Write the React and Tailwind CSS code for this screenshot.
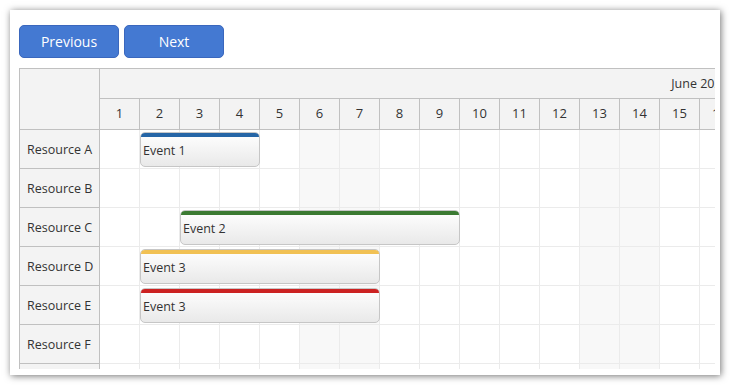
import React from "react";

const days = Array.from({ length: 30 }, (_, i) => i + 1);
const weekend = new Set([6, 7, 13, 14, 20, 21, 27, 28]);
const resources = ["Resource A", "Resource B", "Resource C", "Resource D", "Resource E", "Resource F", "Resource G"];
const events = [
  { row: 0, start: 2, end: 4, text: "Event 1", bar: "bg-[#2565a6]" },
  { row: 2, start: 3, end: 9, text: "Event 2", bar: "bg-[#3b7a32]" },
  { row: 3, start: 2, end: 7, text: "Event 3", bar: "bg-[#f1c154]" },
  { row: 4, start: 2, end: 7, text: "Event 3", bar: "bg-[#cc2222]" },
];

export default function App() {
  const font = { fontFamily: '"Open Sans", "Noto Sans", sans-serif' };
  return (
    <div className="w-[730px] h-[385px] bg-white pt-[10px] pl-[10px]" style={font}>
      <div className="w-[710px] h-[365px] bg-white shadow-[1px_1px_7px_rgba(0,0,0,0.55)] pt-[15px] pl-[9px]">
        <div className="flex gap-[5px] mb-[10px]">
          <button className="w-[100px] h-[33px] rounded-[5px] bg-[#4479d2] border border-[#3a67bd] text-white text-[14px]">Previous</button>
          <button className="w-[100px] h-[33px] rounded-[5px] bg-[#4479d2] border border-[#3a67bd] text-white text-[14px]">Next</button>
        </div>
        <div className="flex w-[696px] h-[301px] border-l border-t border-[#c0c0c0] overflow-hidden text-[#333] text-[12.5px]">
          <div className="w-[80px] shrink-0 border-r border-[#c0c0c0] bg-[#f3f3f3]">
            <div className="h-[61px] border-b border-[#c0c0c0]" />
            {resources.map((r) => (
              <div key={r} className="h-[39px] border-b border-[#c0c0c0] flex items-center pl-[7px] pt-[3px]">
                {r}
              </div>
            ))}
          </div>
          <div className="relative flex-1 overflow-hidden">
            <div className="w-[1200px] relative">
              <div className="h-[30px] border-b border-[#c0c0c0] bg-[#f3f3f3] flex items-center justify-center pt-[2px]">
                June 2020
              </div>
              <div className="h-[31px] border-b border-[#c0c0c0] bg-[#f3f3f3] flex">
                {days.map((d) => (
                  <div key={d} className="w-[40px] shrink-0 border-r border-[#c0c0c0] flex items-center justify-center text-[13px]">
                    {d}
                  </div>
                ))}
              </div>
              {resources.map((r) => (
                <div key={r} className="h-[39px] flex">
                  {days.map((d) => (
                    <div
                      key={d}
                      className={
                        "w-[40px] shrink-0 border-r border-b border-[#ebebeb] " +
                        (weekend.has(d) ? "bg-[#f8f8f8]" : "bg-white")
                      }
                    />
                  ))}
                </div>
              ))}
              {events.map((e, i) => (
                <div
                  key={i}
                  className="absolute h-[35px] rounded-[5px] border border-[#c6c6c6] bg-gradient-to-b from-white to-[#e9e9e9] overflow-hidden"
                  style={{ top: 61 + e.row * 39 + 2, left: (e.start - 1) * 40, width: (e.end - e.start + 1) * 40 }}
                >
                  <div className={"h-[4px] " + e.bar} />
                  <div className="pl-[2px] leading-[28px]">{e.text}</div>
                </div>
              ))}
            </div>
          </div>
        </div>
      </div>
    </div>
  );
}
